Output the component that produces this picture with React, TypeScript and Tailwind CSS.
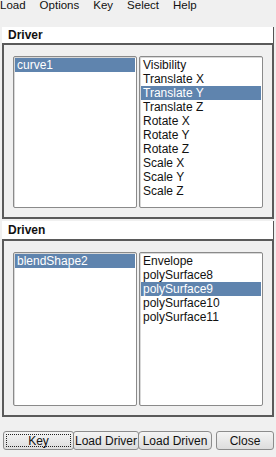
import React from 'react';

const font = { fontFamily: '"Liberation Sans", Arial, sans-serif' };

interface ListProps {
  items: string[];
  selected: number;
}

const ListBox: React.FC<ListProps> = ({ items, selected }) => (
  <div className="flex-1 bg-white border border-[#8a8a8a] rounded-[2px] shadow-[inset_1px_1px_0_#d8d8d8] pt-[1px] px-[1px] overflow-hidden">
    {items.map((it, i) => (
      <div
        key={it}
        className={`h-[14px] leading-[14px] text-[12px] pl-[2px] whitespace-nowrap ${
          i === selected ? 'bg-[#5f84ae] text-white' : 'text-[#111]'
        }`}
      >
        {it}
      </div>
    ))}
  </div>
);

interface SectionProps {
  title: string;
  headerClass: string;
  frameClass: string;
  left: string[];
  right: string[];
  rightSel: number;
}

const Section: React.FC<SectionProps> = ({ title, headerClass, frameClass, left, right, rightSel }) => (
  <div className="flex flex-col mx-[2px]">
    <div className={`bg-white border-r border-[#555] flex items-center pl-[6px] font-bold text-[12px] text-[#111] ${headerClass}`}>
      {title}
    </div>
    <div className={`border-2 border-[#5a5a5a] flex gap-[2px] pl-[9px] pr-[9px] pt-[11px] pb-[9px] ${frameClass}`}>
      <ListBox items={left} selected={0} />
      <ListBox items={right} selected={rightSel} />
    </div>
  </div>
);

const Btn: React.FC<{ label: string; className?: string; focus?: boolean }> = ({ label, className = '', focus }) => (
  <div
    className={`h-[19px] border border-[#8c8c8c] rounded-[3px] bg-gradient-to-b from-[#f4f4f4] to-[#dddddd] flex items-center justify-center text-[12px] leading-[14px] text-[#111] ${className}`}
  >
    {focus ? (
      <div className="m-[2px] self-stretch flex-1 border border-dotted border-[#222] flex items-center justify-center">
        {label}
      </div>
    ) : (
      label
    )}
  </div>
);

export default function App() {
  return (
    <div className="w-[276px] h-[457px] bg-[#f0f0f0] overflow-hidden flex flex-col" style={font}>
      <div className="h-[11px] flex items-end gap-[14px] text-[11.5px] leading-[12px] text-[#111] overflow-hidden">
        <span>Load</span>
        <span>Options</span>
        <span>Key</span>
        <span>Select</span>
        <span>Help</span>
      </div>
      <div className="h-[16px]" />
      <Section
        title="Driver"
        headerClass="h-[16px]"
        frameClass="h-[176px]"
        left={['curve1']}
        right={['Visibility', 'Translate X', 'Translate Y', 'Translate Z', 'Rotate X', 'Rotate Y', 'Rotate Z', 'Scale X', 'Scale Y', 'Scale Z']}
        rightSel={2}
      />
      <div className="h-[2px]" />
      <Section
        title="Driven"
        headerClass="h-[18px]"
        frameClass="h-[178px]"
        left={['blendShape2']}
        right={['Envelope', 'polySurface8', 'polySurface9', 'polySurface10', 'polySurface11']}
        rightSel={2}
      />
      <div className="h-[14px]" />
      <div className="flex pl-[3px] pr-[2px]">
        <Btn label="Key" focus className="w-[71px]" />
        <Btn label="Load Driver" className="w-[66px] -ml-[1px]" />
        <Btn label="Load Driven" className="w-[74px] -ml-[1px] rounded-[4px] border-[#7a7a7a]" />
        <div className="w-[4px]" />
        <Btn label="Close" className="flex-1" />
      </div>
    </div>
  );
}
